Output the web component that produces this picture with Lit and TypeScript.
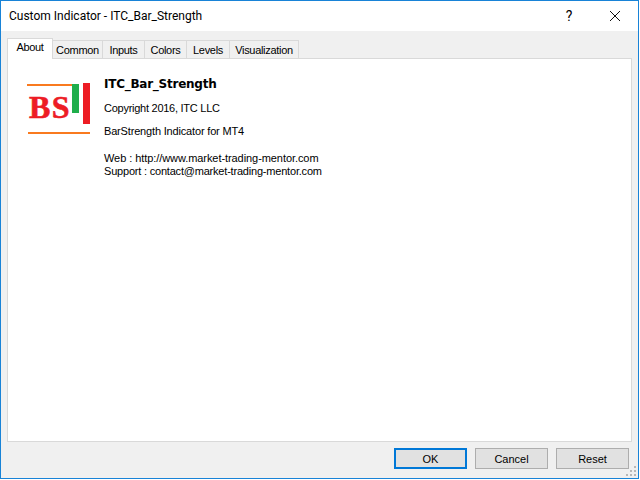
import { LitElement, html, css } from 'lit';
import { customElement } from 'lit/decorators.js';

const TABS = [
  { label: 'About', width: 46 },
  { label: 'Common', width: 50 },
  { label: 'Inputs', width: 42 },
  { label: 'Colors', width: 42 },
  { label: 'Levels', width: 43 },
  { label: 'Visualization', width: 69 },
];

@customElement('app-root')
export class AppRoot extends LitElement {
  static styles = css`
    :host {
      display: block;
      width: 639px;
      height: 479px;
      font-family: "Liberation Sans", Arial, sans-serif;
      color: #000;
    }

    .window {
      box-sizing: border-box;
      width: 639px;
      height: 479px;
      border: 1px solid #1883d7;
      background: #f0f0f0;
      display: flex;
      flex-direction: column;
      position: relative;
    }

    .titlebar {
      height: 30px;
      background: #fff;
      display: flex;
      align-items: center;
      padding-left: 8px;
      font-family: Roboto, "Noto Sans", sans-serif;
      font-size: 12px;
      flex: none;
    }

    .title {
      flex: 1;
    }

    .help {
      width: 46px;
      text-align: center;
      font-size: 14px;
    }

    .close {
      width: 46px;
      display: flex;
      justify-content: center;
    }

    .body {
      flex: 1;
      padding: 7px 6px 0 6px;
      display: flex;
      flex-direction: column;
      min-height: 0;
    }

    .tabs {
      display: flex;
      align-items: flex-end;
      height: 20px;
      position: relative;
      z-index: 1;
      flex: none;
    }

    .tab {
      box-sizing: border-box;
      height: 18px;
      background: #f0f0f0;
      border: 1px solid #d9d9d9;
      border-bottom: none;
      border-left: none;
      font-size: 11px;
      letter-spacing: -0.3px;
      line-height: 18px;
      text-align: center;
    }

    .tab.active {
      height: 21px;
      margin-bottom: -1px;
      background: #fff;
      border-left: 1px solid #d9d9d9;
      line-height: 17px;
    }

    .panel {
      box-sizing: border-box;
      height: 384px;
      background: #fff;
      border: 1px solid #d9d9d9;
      padding: 15px 0 0 19px;
      display: flex;
      gap: 4px;
      flex: none;
    }

    .logo {
      flex: none;
      width: 73px;
      height: 60px;
    }

    .info {
      font-size: 11px;
      line-height: 13px;
      padding-top: 3px;
      color: #000;
    }

    .name {
      font-family: "DejaVu Sans", Verdana, sans-serif;
      font-weight: bold;
      font-size: 12px;
      line-height: 14px;
      letter-spacing: -0.25px;
      margin-bottom: 11px;
    }

    .info p {
      margin: 0;
    }

    .info .copy {
      letter-spacing: -0.26px;
      margin-bottom: 10px;
    }

    .info .desc {
      letter-spacing: -0.17px;
      margin-bottom: 14px;
    }

    .web {
      letter-spacing: -0.07px;
    }

    .support {
      letter-spacing: -0.2px;
    }

    .buttons {
      display: flex;
      justify-content: flex-end;
      gap: 8px;
      padding: 6px 3px 0 0;
    }

    .btn {
      box-sizing: border-box;
      width: 73px;
      height: 21px;
      background: #e1e1e1;
      border: 1px solid #adadad;
      font-family: "Liberation Sans", Arial, sans-serif;
      font-size: 11px;
      padding: 0;
      color: #000;
    }

    .btn.default {
      border: 2px solid #0078d7;
    }

    .grip {
      position: absolute;
      right: 1px;
      bottom: 1px;
    }
  `;

  render() {
    return html`
      <div class="window">
        <div class="titlebar">
          <span class="title">Custom Indicator - ITC_Bar_Strength</span>
          <span class="help">?</span>
          <span class="close">
            <svg width="12" height="12" viewBox="0 0 12 12">
              <path d="M1 1 L11 11 M11 1 L1 11" stroke="#111" stroke-width="1" fill="none"/>
            </svg>
          </span>
        </div>
        <div class="body">
          <div class="tabs">
            ${TABS.map((t, i) => html`
              <div class="tab ${i === 0 ? 'active' : ''}" style="width:${t.width}px">${t.label}</div>
            `)}
          </div>
          <div class="panel">
            <svg class="logo" viewBox="0 0 73 60">
              <rect x="0" y="10" width="45" height="2" fill="#f97a1f"/>
              <rect x="45" y="10" width="7" height="29" fill="#1fae4b"/>
              <rect x="56" y="9" width="7" height="41" fill="#ed1c24"/>
              <text x="2" y="44" font-family="Liberation Serif" font-weight="bold" font-size="32" letter-spacing="1.5" stroke="#ed1c24" stroke-width="0.6" fill="#ed1c24">BS</text>
              <rect x="1" y="58" width="62" height="2" fill="#f97a1f"/>
            </svg>
            <div class="info">
              <div class="name">ITC_Bar_Strength</div>
              <p class="copy">Copyright 2016, ITC LLC</p>
              <p class="desc">BarStrength Indicator for MT4</p>
              <div class="web">Web : http://www.market-trading-mentor.com</div>
              <div class="support">Support : contact@market-trading-mentor.com</div>
            </div>
          </div>
          <div class="buttons">
            <button class="btn default">OK</button>
            <button class="btn">Cancel</button>
            <button class="btn">Reset</button>
          </div>
        </div>
        <svg class="grip" width="11" height="11" viewBox="0 0 11 11" fill="#b8b8b8">
          <rect x="8" y="0" width="2" height="2"/>
          <rect x="4" y="4" width="2" height="2"/>
          <rect x="8" y="4" width="2" height="2"/>
          <rect x="0" y="8" width="2" height="2"/>
          <rect x="4" y="8" width="2" height="2"/>
          <rect x="8" y="8" width="2" height="2"/>
        </svg>
      </div>
    `;
  }
}
